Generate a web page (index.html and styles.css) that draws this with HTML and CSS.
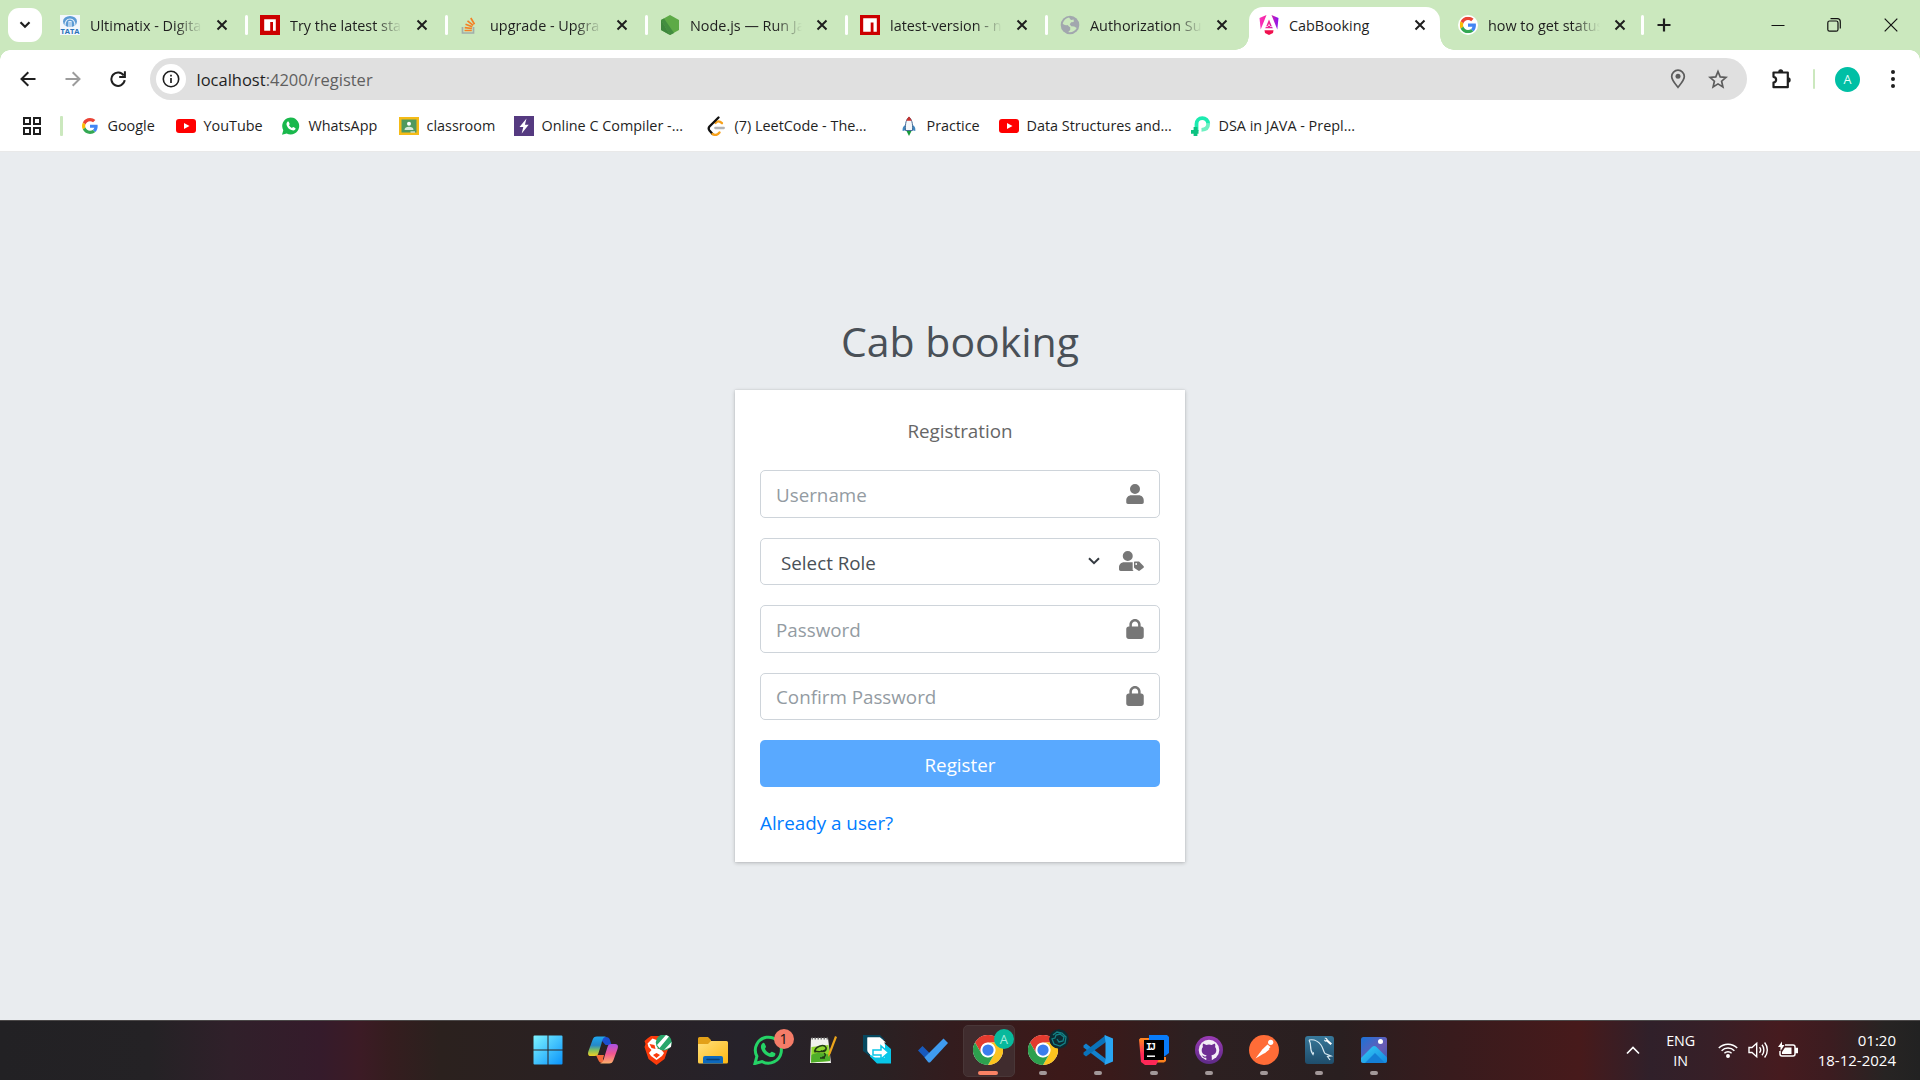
FILE: index.html
```
<!DOCTYPE html>
<html lang="en">
<head>
<meta charset="utf-8">
<title>CabBooking</title>
<link rel="stylesheet" href="styles.css">
</head>
<body>
<svg class="defs" width="0" height="0" aria-hidden="true">
  <defs>
    <linearGradient id="win" x1="0" y1="0" x2="1" y2="1"><stop offset="0" stop-color="#7df4ff"/><stop offset="1" stop-color="#0a93fb"/></linearGradient>
    <linearGradient id="cpA" x1="0" y1="0" x2="0" y2="1"><stop offset="0" stop-color="#1fa8f0"/><stop offset=".45" stop-color="#2588c8"/><stop offset=".7" stop-color="#7fbf62"/><stop offset="1" stop-color="#f2d022"/></linearGradient>
    <linearGradient id="cpB" x1="0" y1="0" x2="0" y2="1"><stop offset="0" stop-color="#a751e4"/><stop offset=".5" stop-color="#f1568f"/><stop offset="1" stop-color="#fdb06a"/></linearGradient>
    <linearGradient id="fold" x1="0" y1="0" x2="1" y2="1"><stop offset="0" stop-color="#ffe07c"/><stop offset="1" stop-color="#fdb813"/></linearGradient>
    <linearGradient id="ang" x1="0" y1="0" x2="1" y2="0"><stop offset="0" stop-color="#fb2fc0"/><stop offset=".5" stop-color="#f0258f"/><stop offset="1" stop-color="#8514f5"/></linearGradient>
    <linearGradient id="gh" x1="0" y1="0" x2="0" y2="1"><stop offset="0" stop-color="#9a3bb5"/><stop offset="1" stop-color="#5d2a86"/></linearGradient>
    <linearGradient id="sql" x1="0" y1="0" x2="0" y2="1"><stop offset="0" stop-color="#37789a"/><stop offset="1" stop-color="#1f4d6b"/></linearGradient>
    <linearGradient id="photo" x1="0" y1="0" x2="1" y2="1"><stop offset="0" stop-color="#1a73d8"/><stop offset=".6" stop-color="#6a5bb5"/><stop offset="1" stop-color="#2a62b8"/></linearGradient>
    <linearGradient id="hill" x1="0" y1="0" x2="1" y2="1"><stop offset="0" stop-color="#35cdf6"/><stop offset="1" stop-color="#1489e0"/></linearGradient>
    <linearGradient id="ij" x1="0" y1="0" x2="0" y2="1"><stop offset="0" stop-color="#ff8a1f"/><stop offset=".6" stop-color="#fe2857"/></linearGradient>

    <symbol id="i-google" viewBox="0 0 48 48">
      <path fill="#ea4335" d="M24 9.500c3.500 0 6.700 1.200 9.200 3.600l6.900-6.900C35.900 2.400 30.500 0 24 0 14.600 0 6.500 5.400 2.600 13.200l8 6.200C12.400 13.700 17.700 9.500 24 9.500z"/>
      <path fill="#4285f4" d="M47 24.500c0-1.600-.2-3.100-.4-4.500H24v9h12.900c-.6 3-2.300 5.500-4.800 7.200l7.700 6C44.400 38 47 31.800 47 24.500z"/>
      <path fill="#fbbc05" d="M10.500 28.600c-.5-1.500-.8-3-.8-4.600s.3-3.100.8-4.600l-8-6.200C.9 16.500 0 20.100 0 24s.9 7.500 2.600 10.800z"/>
      <path fill="#34a853" d="M24 48c6.500 0 11.900-2.100 15.900-5.800l-7.700-6c-2.200 1.500-4.900 2.300-8.200 2.300-6.300 0-11.600-4.200-13.500-9.900l-8 6.200C6.500 42.600 14.600 48 24 48z"/>
    </symbol>
    <symbol id="i-youtube" viewBox="0 0 20 20"><rect x="0" y="3" width="20" height="14" rx="3" fill="#f00"/><path d="M8 7l5.500 3L8 13z" fill="#fff"/></symbol>
    <symbol id="i-npm" viewBox="0 0 20 20"><path fill="#c00" d="M0 0h20v20H0z"/><path fill="#fff" d="M4.200 4.200h11.600v11.600H13V7h-2.800v8.800h-6z"/></symbol>
    <symbol id="i-npm2" viewBox="0 0 20 20"><path fill="#c00" d="M0 0h20v20H0z"/><path fill="#fff" d="M3.200 3.200h13.600v13.600h-3.300V7.500h-2.800v9.300H3.200z"/></symbol>
    <symbol id="i-whatsapp" viewBox="0 0 30 30"><path d="M2 28.500l1.900-7.200A13 13 0 1 1 9 26.500z" fill="none" stroke="#25d366" stroke-width="3"/><path d="M9.300 8.400c.8-.9 1.800-.9 2.300.1l1.300 2.800c.4 1-.9 1.900-1 2.400 1.100 2.200 2.500 3.500 4.700 4.500.8-.2 1.500-1.800 2.400-1.500l2.900 1.400c.9.500.6 1.700 0 2.600-1.300 1.600-3.400 1.700-5.500 1-4.300-1.500-6.900-4.200-8.200-8-.6-2.200-.3-3.900 1.100-5.300z" fill="#25d366"/></symbol>
    <symbol id="i-chrome" viewBox="0 0 48 48"><circle cx="24" cy="24" r="24" fill="#fff"/><path fill="#e33b2e" d="M3.200 12A24 24 0 0 1 44.800 12H24a12 12 0 0 0-10.400 18z"/><path fill="#fcc31e" d="M44.800 12A24 24 0 0 1 24 48l10.400-18A12 12 0 0 0 24 12z"/><path fill="#2da04e" d="M3.200 12A24 24 0 0 0 24 48l10.400-18a12 12 0 0 1-20.800 0z"/><circle cx="24" cy="24" r="11.500" fill="#fff"/><circle cx="24" cy="24" r="9" fill="#3b7ded"/></symbol>
    <symbol id="i-close" viewBox="0 0 12 12"><path d="M1.500 1.500l9 9m0-9l-9 9" stroke="#1f1f1f" stroke-width="2"/></symbol>
    <symbol id="i-lock" viewBox="0 0 448 512"><path d="M144 144v48H304V144c0-44.200-35.800-80-80-80s-80 35.800-80 80zM80 192V144C80 64.500 144.500 0 224 0s144 64.500 144 144v48h16c35.300 0 64 28.700 64 64V448c0 35.300-28.700 64-64 64H64c-35.300 0-64-28.700-64-64V256c0-35.300 28.700-64 64-64z"/></symbol>
  </defs>
</svg>

<header class="tabstrip">
  <button class="tab-search" aria-label="Search tabs"><svg width="12" height="8" viewBox="0 0 12 8"><path d="M1.500 1.300L6 5.800l4.500-4.500" fill="none" stroke="#1f1f1f" stroke-width="2.200"/></svg></button>
  <nav class="tabs">
    <div class="tab"><svg class="fav" viewBox="0 0 20 20"><path fill="#f3f7fc" d="M0 0h20v20H0z"/><ellipse cx="10" cy="6.500" rx="7" ry="5.500" fill="#5b9ad4"/><path d="M5 11c0-6 2.500-7 5-7s5 1 5 7M9 12V6.500h2V12" stroke="#e6f0fa" stroke-width="1.200" fill="none"/><text x="10" y="19" text-anchor="middle" font-size="7" font-weight="700" textLength="19" lengthAdjust="spacingAndGlyphs" fill="#2a72b8">TATA</text></svg><span class="title">Ultimatix - Digita</span><svg class="x"><use href="#i-close"/></svg></div>
    <div class="tab"><svg class="fav"><use href="#i-npm"/></svg><span class="title">Try the latest stab</span><svg class="x"><use href="#i-close"/></svg></div>
    <div class="tab"><svg class="fav" viewBox="0 0 20 20"><path d="M2.500 12v6h11v-6" fill="none" stroke="#a3adaa" stroke-width="1.700"/><path d="M4.500 15.500h7.300M4.700 12.600l7.200.9M5.500 9.300l6.800 2.500M7.500 5.900l5.700 4.500M10.800 3l3.700 6.200" stroke="#f48024" stroke-width="1.700"/></svg><span class="title">upgrade - Upgra</span><svg class="x"><use href="#i-close"/></svg></div>
    <div class="tab"><svg class="fav" viewBox="0 0 20 20"><path d="M10 0l9 5v10l-9 5-9-5V5z" fill="#5daa46"/><path d="M1 5l9 15-9-5z" fill="#3e863d"/><path d="M4 3.500L14 18l-4 2L1 5z" fill="#438d40"/></svg><span class="title">Node.js — Run Ja</span><svg class="x"><use href="#i-close"/></svg></div>
    <div class="tab"><svg class="fav"><use href="#i-npm2"/></svg><span class="title">latest-version - n</span><svg class="x"><use href="#i-close"/></svg></div>
    <div class="tab no-sep"><svg class="fav" viewBox="0 0 20 20"><circle cx="10" cy="10" r="9.300" fill="#a2a7ae"/><path d="M9 2.500c-3 .6-5.500 3-6.300 6 1 1.500 3 2 4.500 1.500 1.500.4 1.500 2 3 2.300V15l-2 2c3.500.8 7-1 8.500-4l-2.500-1.500-3-.2-1.500-2 1.500-2 2.500-.3V4.500L11 5z" fill="#cbe8be"/></svg><span class="title">Authorization Su</span><svg class="x"><use href="#i-close"/></svg></div>
    <div class="tab active"><svg class="fav" viewBox="0 0 20 20"><path fill="url(#ang)" d="M12.500 0L19.500 3l-1.200 11.500zM13.800 13.200H6.200L7.300 11h5.400zM7.500 0L.5 3l1.200 11.500zM10 4.500l-3 7.300h1.800L10 8.500l1.200 3.300H13z"/><path d="M5.500 15.300h9L14 18l-4 2-4-2z" fill="#f0104e"/></svg><span class="title">CabBooking</span><svg class="x"><use href="#i-close"/></svg></div>
    <div class="tab last"><svg class="fav disc" viewBox="-5 -5 58 58"><use href="#i-google" width="48" height="48"/></svg><span class="title">how to get status</span><svg class="x"><use href="#i-close"/></svg></div>
  </nav>
  <button class="new-tab" aria-label="New tab"><svg width="14" height="14" viewBox="0 0 14 14"><path d="M7 .5v13M.5 7h13" stroke="#1f1f1f" stroke-width="2.200"/></svg></button>
  <div class="window-controls">
    <svg width="14" height="14" viewBox="0 0 14 14"><path d="M.5 7.500h13" stroke="#111"/></svg>
    <svg width="14" height="14" viewBox="0 0 14 14" fill="none" stroke="#111" stroke-width="1.200"><rect x=".8" y="3" width="10.200" height="10.200" rx="1.800"/><path d="M3.500.7h6.800a3 3 0 0 1 3 3v6.800"/></svg>
    <svg width="14" height="14" viewBox="0 0 14 14"><path d="M.7.7l12.600 12.600m0-12.600L.7 13.300" stroke="#111" stroke-width="1.200"/></svg>
  </div>
</header>

<div class="toolbar">
  <div class="nav-buttons">
    <svg width="16" height="16" viewBox="0 0 16 16" fill="none" stroke="#1f1f1f" stroke-width="2"><path d="M15.500 8H2M8.300 1.200L1.500 8l6.800 6.800"/></svg>
    <svg width="16" height="16" viewBox="0 0 16 16" fill="none" stroke="#9c9c9c" stroke-width="2"><path d="M.5 8H14M7.700 1.200L14.500 8l-6.800 6.800"/></svg>
    <svg width="16" height="16" viewBox="0 0 16 16" fill="none" stroke="#1f1f1f" stroke-width="2"><path d="M13.700 4.500A6.700 6.700 0 1 0 14.700 9.200M14.900 .3v5.700H9.200"/></svg>
  </div>
  <div class="omnibox">
    <span class="site-info"><svg width="18" height="18" viewBox="0 0 18 18"><circle cx="9" cy="9" r="7.700" fill="none" stroke="#1f1f1f" stroke-width="1.600"/><path d="M9 8v5M9 4.800v1.800" stroke="#1f1f1f" stroke-width="1.700"/></svg></span>
    <span class="url">localhost<span class="path">:4200/register</span></span>
    <div class="omni-actions">
      <svg width="16" height="20" viewBox="0 0 16 20"><path d="M8 18.300C4.500 14 1.700 11 1.700 7.500a6.300 6.300 0 0 1 12.600 0C14.300 11 11.500 14 8 18.300z" fill="none" stroke="#5c5c5c" stroke-width="1.700"/><circle cx="8" cy="7.300" r="2.500" fill="#5c5c5c"/></svg>
      <svg width="20" height="20" viewBox="0 0 20 20"><path d="M10 2.500l2.200 5.400 5.800.5-4.400 3.800 1.300 5.700-4.900-3-4.900 3 1.300-5.700L2 8.400l5.800-.5z" fill="none" stroke="#5c5c5c" stroke-width="1.700"/></svg>
    </div>
  </div>
  <svg class="puzzle" width="22" height="22" viewBox="0 0 22 22"><path d="M2.500 4.500h14.300v14.700H2.500v-4.700c3.500-.7 3.500-5 0-5.700z" fill="none" stroke="#1f1f1f" stroke-width="2.200" stroke-linejoin="round"/><path d="M7.200 4a2.500 2.700 0 0 1 5 0zM17 9.300a2.700 2.600 0 0 1 0 5.200z" fill="#1f1f1f"/></svg>
  <span class="rule"></span>
  <span class="avatar">A</span>
  <svg class="dots" width="6" height="20" viewBox="0 0 6 20" fill="#1f1f1f"><circle cx="3" cy="3" r="2"/><circle cx="3" cy="10" r="2"/><circle cx="3" cy="17" r="2"/></svg>
</div>

<nav class="bookmarks">
  <svg width="18" height="18" viewBox="0 0 18 18" fill="none" stroke="#1f1f1f" stroke-width="2"><path d="M1 1h6v6H1zM11 1h6v6h-6zM1 11h6v6H1zM11 11h6v6h-6z"/></svg>
  <span class="rule"></span>
  <a class="bm"><svg viewBox="-6 -6 60 60"><use href="#i-google" width="48" height="48"/></svg>Google</a>
  <a class="bm"><svg><use href="#i-youtube"/></svg>YouTube</a>
  <a class="bm"><svg viewBox="0 0 20 20"><path d="M1 18.700l1.300-4.500A8.500 8.500 0 1 1 5.700 17.500z" fill="#19b84c"/><path d="M6.300 6c.5-.6 1.200-.6 1.500 0l.8 1.800c.3.600-.5 1.200-.6 1.500.7 1.300 1.500 2 2.800 2.600.5-.1 1-1.100 1.500-.9l1.900.9c.5.300.3 1.100 0 1.600-1 1.200-2.500 1-3.800.5-2.500-1-4-2.500-4.700-4.800-.4-1.300-.2-2.400.6-3.200z" fill="#fff"/></svg>WhatsApp</a>
  <a class="bm"><svg viewBox="0 0 20 20"><path fill="#f5bb16" d="M0 1h20v18H0z"/><path fill="#50995e" d="M2.500 3.500h15v13h-15z"/><circle cx="10" cy="7.800" r="2" fill="#fff"/><path d="M5.500 14c0-2 2-3.200 4.500-3.200s4.500 1.200 4.500 3.200z" fill="#d7eadb"/><path d="M11.500 15.500h4.500v1h-4.500z" fill="#fff"/></svg>classroom</a>
  <a class="bm"><svg viewBox="0 0 20 20"><path fill="#553a80" d="M0 0h20v20H0z"/><path fill="#fff" d="M12.500 2.500L5.500 11h3.800L7.700 17.500l7-8.800h-3.800z"/></svg>Online C Compiler -...</a>
  <a class="bm leet"><svg viewBox="0 0 20 20" fill="none" stroke-linecap="round" stroke-width="2.300"><path d="M16 7.200c-2.500-2.400-4.500-2.300-6.500-.2" stroke="#f7a11b"/><path d="M12.500 1.500L3.500 10.500c-1 1.200-1 2.700 0 4l3 3.500" stroke="#111"/><path d="M6.500 18c2.500 1.500 5 1.200 7-1.500" stroke="#f7a11b"/><path d="M9.300 12h8.500" stroke="#b3b3b3"/></svg>(7) LeetCode - The...</a>
  <a class="bm"><svg viewBox="0 0 20 20"><path d="M6.500 9C3.500 10.500 3.500 13 3.700 15l3.500-1h5.600l3.500 1c.2-2 .2-4.500-2.800-6z" fill="#3f87c0"/><path d="M10 1c2.600 2.500 4 5.500 3.500 13.500h-7C6 6.500 7.400 3.500 10 1z" fill="#f4f7fa" stroke="#456c96"/><path d="M10 .5c1.300 1.300 2 2.500 2.700 4.200H7.300C8 3 8.700 1.800 10 .5z" fill="#c8322d"/><path d="M7.500 15h5L10 20z" fill="#179b3a"/></svg>Practice</a>
  <a class="bm"><svg><use href="#i-youtube"/></svg>Data Structures and...</a>
  <a class="bm"><svg viewBox="0 0 20 20" fill="none" stroke-width="3.800"><path d="M5.500 15V8a5.700 5.700 0 0 1 11.700-.2" stroke="#1cebb0"/><path d="M17.200 7.500c0 4-2.500 6.200-6.700 6.300" stroke="#6ff0c2"/><path d="M0 15.800h7.500M4.500 11v9" stroke="#0cc281"/></svg>DSA in JAVA - Prepl...</a>
</nav>

<main class="page">
  <h1 class="brand">Cab booking</h1>
  <section class="card">
    <p class="card-title">Registration</p>
    <div class="field"><span>Username</span><svg width="18" height="20" viewBox="0 0 448 512"><path d="M224 256A128 128 0 1 0 224 0a128 128 0 1 0 0 256zM130 288C55 288 0 345 0 420v48c0 26 18 44 44 44H404c26 0 44-18 44-44V420C448 345 393 288 318 288z"/></svg></div>
    <div class="field select"><span>Select Role</span><svg class="caret" width="12" height="8" viewBox="0 0 12 8"><path d="M1 1.200L6 6.200l5-5" fill="none" stroke="#343a40" stroke-width="2"/></svg><svg width="25" height="20" viewBox="0 0 640 512"><path d="M224 256A128 128 0 1 0 224 0a128 128 0 1 0 0 256zM130 288C55 288 0 345 0 420v48c0 26 18 44 44 44H375c-10-8-18-18-25-28V288zM384 283V409c0 8 3 17 9 23l96 70c13 13 33 13 46 0l92-72c13-13 13-33 0-45l-107-107c-6-6-14-9-23-9H400c-9 0-16 7-16 14zm56 27a24 24 0 1 1 0 48 24 24 0 1 1 0-48z"/></svg></div>
    <div class="field"><span>Password</span><svg width="18" height="20"><use href="#i-lock"/></svg></div>
    <div class="field"><span>Confirm Password</span><svg width="18" height="20"><use href="#i-lock"/></svg></div>
    <button class="register">Register</button>
    <a class="login-link">Already a user?</a>
  </section>
</main>

<footer class="taskbar">
  <div class="apps">
    <span class="app"><svg viewBox="0 0 30 30"><path fill="url(#win)" d="M.5 1.500A1 1 0 0 1 1.500.5H14.500v14H.5zM15.500.5H28.500a1 1 0 0 1 1 1v13h-14zM.5 15.500h14v14h-13a1 1 0 0 1-1-1zM15.500 15.500h14v13a1 1 0 0 1-1 1h-13z"/></svg></span>
    <span class="app"><svg viewBox="0 0 30 30"><path d="M14 2h4c2 0 3.500 1 4 3l1.500 5h-6L14 6z" fill="#1c4fd0"/><path d="M8 20h8l-1 4 2 4h-2c-3 0-4-1-5-3.500z" fill="#f4693b"/><path d="M9 1.500h9c-3 1-3.500 3-4.500 7L10.500 18c-.5 2-1.500 3-4 3H3c-3 0-3.500-2-2.500-5L4.500 5C5.300 2.500 6.500 1.500 9 1.500z" fill="url(#cpA)"/><path d="M21 28.500h-9c3-1 3.500-3 4.500-7L19.500 12c.5-2 1.500-3 4-3H27c3 0 3.500 2 2.500 5L25.500 25c-.8 2.500-2 3.500-4.500 3.500z" fill="url(#cpB)"/></svg></span>
    <span class="app"><svg viewBox="0 0 30 30"><path d="M8 1h12l3 2.500 2.500 3-1 3 1 3-4 11.500L13.500 30 5.500 24 1.500 12l1-3-1-3L5 3z" fill="#fb3b0b"/><path d="M13.500 5l4-1.500 5 5-1 3.500-3 3 2.500 3-2 3-5.500 4-5.500-4-2-3 2.500-3-3-3-1-3.500 5-5z" fill="#fff"/><path d="M6.500 9l5 1 1 4-4-1zm14 0l-5 1-1 4 4-1zM10 20l3.500-2 3.500 2-3.500 3z" fill="#fb3b0b"/><circle cx="20.800" cy="7.500" r="8" fill="#28a56a"/><path d="M14 10L23 0l3 1.500-9.500 11.500zM21 15l7.500-8-.5 5z" fill="#fff"/></svg></span>
    <span class="app"><svg viewBox="0 0 30 30"><path d="M0 3.500A1.500 1.500 0 0 1 1.500 2H10l3 3v5H0z" fill="#e2a018"/><path d="M0 9h10l3-3h15.500A1.500 1.500 0 0 1 30 7.500V27a1.500 1.500 0 0 1-1.500 1.500h-27A1.500 1.500 0 0 1 0 27z" fill="url(#fold)"/><path d="M5 28.500V23a2 2 0 0 1 2-2h16a2 2 0 0 1 2 2v5.500z" fill="#0d69bd"/><path d="M9 24.500h12" stroke="#073f75" stroke-width="1.500" stroke-linecap="round"/></svg></span>
    <span class="app"><svg><use href="#i-whatsapp"/></svg><b class="badge count">1</b></span>
    <span class="app"><svg viewBox="0 0 30 30"><path d="M3 3h17l3 25H2z" fill="#f1f1ee"/><path d="M3.500 12l17-2 1.500 16-19 1.500z" fill="#8fd72f"/><path d="M3.500 20c5-3 12-2 18.500 0v6l-19 1.500z" fill="#4fae2a"/><path d="M7 17.500c-1-6 9-9 11-5 1 4-4 5-5 3m-7 0c4 2 9 1 12-1M12 23h5m-1-5c3 2 0 5-2 4" fill="none" stroke="#213a14" stroke-width="1.500"/><path d="M3.500 3.500h17" stroke="#777" stroke-width="2" stroke-dasharray="1.500 1.500"/><path d="M29 2L22.500 19l-2.500 3 .5-4L27 1z" fill="#eca51b"/></svg></span>
    <span class="app"><svg viewBox="0 0 30 30"><path d="M0 0h17l5 5H8v17L0 16z" fill="#06485f"/><path d="M4.500 2.500H17l6 5h-9v15H10l-5.500-6z" fill="#fff"/><path d="M13 7h7l8 7v14.500H14l-7-7V20h6z" fill="#08c6e8"/><path d="M4.500 2.500H17c3 2 5 5 5 8v12H12c-4-2-7.500-5-7.500-8z" fill="#fff"/><path d="M10 15h8v-4l7.500 6.500L18 24v-4h-8z" fill="#fff" stroke="#08c6e8" stroke-width="1.500"/></svg></span>
    <span class="app"><svg viewBox="0 0 30 30"><path d="M0 15.500l4.500-4.500 10 10-3.500 6z" fill="#185abd"/><path d="M6.500 22.500L25.500 3.500l4.500 4.500L12.500 27c-.8.800-1.700.8-2.500 0z" fill="#3f9bef"/></svg></span>
    <span class="app current"><svg><use href="#i-chrome"/></svg><b class="badge letter">A</b></span>
    <span class="app open"><svg><use href="#i-chrome"/></svg><b class="badge"><svg viewBox="0 0 20 20"><circle cx="10" cy="10" r="10" fill="#0c2a31"/><path d="M4 6l4-3 5 1 4 4-1 6-5 3-6-2-2-5 3-1 1-3 4-1 4 3-1 4-4 1-2-3" fill="none" stroke="#138286" stroke-width="1.300"/></svg></b></span>
    <span class="app open"><svg viewBox="0 0 30 30"><path d="M.5 10.500L3 8.500l20 15.500v5.500L.5 12.500z" fill="#1381cd"/><path d="M.5 19.500L3 21.500 23 7V0L.5 17.500z" fill="#0a72b9"/><path d="M21.500 0L30 3.500v23L21.500 30l1-6V7z" fill="#29a5f2"/></svg></span>
    <span class="app open"><svg viewBox="0 0 30 30"><path d="M10 0h18l2 2v16l-8 6H10z" fill="#087cfa"/><path d="M18 22h9v4l-2 1.500h-7z" fill="#fc801d"/><path d="M0 4.500L1.500 3H10v21h10l-3 6H6l-4-3z" fill="url(#ij)"/><path d="M5 5h20v20H5z" fill="#000"/><text x="7" y="14.500" font-family="Liberation Mono" font-size="10" font-weight="700" fill="#fff" textLength="10">IJ</text><path d="M8 21.200h8" stroke="#fff" stroke-width="1.500"/></svg></span>
    <span class="app open"><svg viewBox="0 0 30 30"><circle cx="15" cy="15" r="14" fill="url(#gh)"/><circle cx="15" cy="15" r="10.300" fill="#f3eef6"/><path d="M12.300 25.500v-2.800c-2.600.5-3.300-1.100-4.500-2.300 1.600-.2 2.300 1.300 3.400 1.200.7 0 1.200-.6 1.400-1.200-3-.4-4.900-1.800-4.900-5.300 0-1.300.4-2.300 1.200-3.200-.3-1-.3-2.200.1-3.200 1.200 0 2.200.6 3.200 1.300a10 10 0 0 1 5.600 0c1-.7 2-1.300 3.200-1.300.4 1 .4 2.200.1 3.200.8.900 1.200 1.900 1.200 3.200 0 3.500-1.900 4.900-4.900 5.300.3.500.4 1.200.4 2v3.100z" fill="#6f2e93"/></svg></span>
    <span class="app open"><svg viewBox="0 0 30 30"><circle cx="15" cy="15" r="15" fill="#ff6c37"/><circle cx="21.700" cy="7.300" r="2.600" fill="#fff"/><path d="M18.500 9.500l3 2.500-5 5.500L6.500 23.500l6.800-9z" fill="#fff"/><path d="M14 15l6-1-5.500 4" fill="none" stroke="#fff" stroke-width="1.500"/></svg></span>
    <span class="app open"><svg viewBox="0 0 30 30"><rect x="1" y="1" width="29" height="28" rx="3" fill="url(#sql)"/><path d="M5 5c5-1 9 1 12 5 2.500 3.500 2 6 4 8.500l6 2.500-3.500.5 2.500 3.500M5 5c1 2 1.500 3 1.500 5.500 0 4 1 7 2.500 9 .5-1 .5-2 1-2" fill="none" stroke="#d8e9f2" stroke-width="1.200"/><path d="M20.500 3c1-.5 2 0 2.500.5l1 1.500 4 3.500-1.500 1.500-4-3.500c-1.500.5-2.500-.5-2.500-2l1.500 1 1-1z" fill="#fff"/></svg></span>
    <span class="app open"><svg viewBox="0 0 30 30"><rect x="2" y="2" width="26" height="26" rx="2.500" fill="url(#photo)"/><circle cx="21.500" cy="6.500" r="2.500" fill="#fff"/><path d="M2 23L13 12c1.500-1.500 3-1.500 4.500 0L28 22.500v3a2.500 2.500 0 0 1-2.500 2.500h-21A2.500 2.500 0 0 1 2 25.500z" fill="url(#hill)"/><path d="M6 28l10-10 10 10z" fill="#147fd6"/></svg></span>
  </div>
  <div class="tray">
    <svg width="14" height="9" viewBox="0 0 14 9"><path d="M1 7.500l6-6 6 6" fill="none" stroke="#fff" stroke-width="1.700"/></svg>
    <div class="lang"><span>ENG</span><span>IN</span></div>
    <div class="status">
      <svg width="20" height="16" viewBox="0 0 20 16" fill="none" stroke="#fff" stroke-width="1.500"><path d="M.8 6a13 13 0 0 1 18.400 0M3.600 8.700a9 9 0 0 1 12.800 0M6.400 11.300a5 5 0 0 1 7.200 0"/><circle cx="10" cy="14" r="1.200" fill="#fff"/></svg>
      <svg width="20" height="18" viewBox="0 0 20 18" fill="none" stroke="#fff" stroke-width="1.400"><path d="M1 6.500h3L8.700 2.300v13.400L4 11.500H1zM11.500 6.300c1.300 1.500 1.300 3.900 0 5.400M14 3.800c2.500 3 2.500 7.400 0 10.400M16.600 1.500c3.600 4.300 3.600 10.700 0 15"/></svg>
      <svg width="20" height="18" viewBox="0 0 20 18"><path d="M7 4h8a2 2 0 0 1 2 2v7a2 2 0 0 1-2 2H4a2 2 0 0 1-2-2v-3M18 7.500h1.300v4H18z" fill="none" stroke="#fff" stroke-width="1.500"/><path d="M7 6.500h6.500v6.500H4v-2zM4 .5L0 6h2.500v4L6.500 4H4z" fill="#fff"/></svg>
    </div>
    <div class="clock"><span>01:20</span><span>18-12-2024</span></div>
  </div>
</footer>
</body>
</html>
```
FILE: styles.css
```
* { box-sizing: border-box; }
body {
  margin: 0;
  width: 1920px;
  height: 1080px;
  overflow: hidden;
  display: flex;
  flex-direction: column;
  background: #fff;
  color: #1f1f1f;
  font: 14.4px/20px "Open Sans", "Noto Sans", sans-serif;
}
svg { display: block; flex: none; }
button { border: 0; padding: 0; font: inherit; background: none; }
.defs { position: absolute; }

/* Tab strip */
.tabstrip {
  display: flex;
  height: 50px;
  flex: none;
  background: #cbe8be;
}
.tab-search {
  width: 34px;
  height: 34px;
  margin: 8px 6px 0 8px;
  display: grid;
  place-items: center;
  border-radius: 11px;
  background: #fff;
}
.tabs { display: flex; width: 1596px; }
.tab {
  position: relative;
  width: 200px;
  height: 50px;
  padding: 0 20px 0 12px;
  display: flex;
  align-items: center;
}
.tab::after {
  content: "";
  position: absolute;
  right: 0;
  top: 15px;
  width: 3px;
  height: 20px;
  border-radius: 2px;
  background: #fff;
}
.tab.no-sep::after { display: none; }
.fav { width: 20px; height: 20px; margin-right: 10px; }
.fav.disc { border-radius: 50%; background: #fff; }
.title {
  width: 112px;
  flex: none;
  padding-top: 2px;
  white-space: nowrap;
  margin-right: 14px;
  -webkit-mask-image: linear-gradient(90deg, #000 76%, transparent);
  mask-image: linear-gradient(90deg, #000 76%, transparent);
}
.x { width: 12px; height: 12px; }
.tab.active {
  width: 191px;
  height: 43px;
  margin: 7px 0 0 1px;
  padding: 0 0 7px 10px;
  border-radius: 14px 14px 0 0;
  background: #fff;
}
.tab.active .title { margin-right: 13px; -webkit-mask-image: none; mask-image: none; }
.tab.active::before,
.tab.active::after {
  content: "";
  position: absolute;
  top: auto;
  bottom: 0;
  width: 14px;
  height: 14px;
  border-radius: 0;
}
.tab.active::before { left: -14px; background: radial-gradient(circle at 0 0, #cbe8be 13.5px, #fff 14px); }
.tab.active::after { right: -14px; background: radial-gradient(circle at 100% 0, #cbe8be 13.5px, #fff 14px); }
.tab.last { width: 204px; padding-left: 18px; }
.new-tab { width: 39px; display: grid; place-items: center; }
.window-controls {
  display: grid;
  grid-template-columns: 57px 56px 58px;
  margin-left: 66px;
  place-items: center;
}

/* Toolbar */
.toolbar {
  display: flex;
  align-items: center;
  height: 50px;
  flex: none;
  padding-top: 8px;
  background:
    radial-gradient(circle at 10px 10px, #fff 9.5px, #cbe8be 10px) 0 0 / 10px 10px no-repeat,
    radial-gradient(circle at 0 10px, #fff 9.5px, #cbe8be 10px) 100% 0 / 10px 10px no-repeat,
    #fff;
}
.nav-buttons { display: flex; gap: 29px; padding-left: 19.5px; width: 150px; }
.omnibox {
  display: flex;
  align-items: center;
  width: 1597px;
  height: 42px;
  padding: 0 19px 0 6px;
  border-radius: 21px;
  background: #e0e0e0;
}
.site-info {
  width: 30px;
  height: 30px;
  display: grid;
  place-items: center;
  border-radius: 50%;
  background: #fff;
}
.url { margin-left: 10.5px; padding-top: 1px; font-size: 16.5px; }
.path { color: #5f5f5f; }
.omni-actions { display: flex; gap: 22px; margin-left: auto; }
.puzzle { margin-left: 24px; }
.rule { width: 2px; height: 20px; border-radius: 1px; background: #cbe8be; }
.toolbar .rule { margin-left: 20px; }
.avatar {
  width: 25px;
  height: 25px;
  margin-left: 20px;
  border-radius: 50%;
  background: #00bfa5;
  color: #e5fffa;
  font-size: 12.5px;
  line-height: 25px;
  text-align: center;
}
.dots { margin-left: 29.5px; }

/* Bookmarks */
.bookmarks {
  display: grid;
  grid-template-columns: 37px 20px 96px 105px 118px 115px 192px 193px 100px 192px 200px;
  align-items: center;
  height: 52px;
  flex: none;
  padding-left: 23px;
  border-bottom: 1px solid #e9e9e9;
}
.bookmarks .rule { width: 3px; }
.bm { display: flex; align-items: center; gap: 7.5px; white-space: nowrap; }
.bm svg { width: 20px; height: 20px; }
.bm.leet { gap: 8.5px; }

/* Registration page */
.page {
  height: 868px;
  flex: none;
  display: flex;
  flex-direction: column;
  align-items: center;
  padding-top: 156px;
  background: #e9ecef;
}
.brand {
  margin: 0 0 16px;
  height: 66px;
  color: #495057;
  font-size: 41px;
  font-weight: 400;
  line-height: 66px;
}
.card {
  width: 450px;
  height: 472px;
  padding: 26px 25px 25px;
  background: #fff;
  box-shadow: 0 0 1px rgba(0, 0, 0, .13), 0 1px 4px rgba(0, 0, 0, .22);
  color: #666;
  font-size: 18.8px;
  line-height: 30px;
}
.card-title { margin: 0 0 24px; text-align: center; }
.field {
  display: flex;
  align-items: center;
  height: 47.5px;
  margin-bottom: 20px;
  padding: 0 15px;
  border: 1px solid #ced4da;
  border-radius: 5px;
  color: #939ba2;
}
.field span { flex: 1; padding-top: 2px; }
.field svg { fill: #777; }
.field.select { padding-left: 20px; color: #495057; }
.field.select span { padding-top: 3px; }
.field .caret { margin-right: 19px; }
.register {
  width: 400px;
  height: 47px;
  display: block;
  padding-top: 2px;
  border-radius: 5px;
  background: #59a9ff;
  color: #fff;
}
.login-link { display: block; margin-top: 21px; color: #007bff; }

/* Taskbar */
.taskbar {
  display: flex;
  height: 60px;
  flex: none;
  padding-left: 520.5px;
  border-top: 1px solid #4b4848;
  background: linear-gradient(90deg, #222124 0, #242225 150px, #30202a 230px, #351b2b 320px, #3c1b25 360px, #351d1f 390px, #2b211e 440px, #2a2122 560px, #26222a 740px, #2a2123 880px, #331c1e 950px, #3c1919 1060px, #391a1a 1110px, #2d2021 1190px, #291f20 1340px, #381b1d 1450px, #471a1b 1580px, #30202a 1650px, #371f27 1710px, #461b1f 1780px, #3c1c20 1830px, #272423 1885px, #222 1920px);
}
.apps { display: flex; }
.app {
  position: relative;
  width: 55.05px;
  height: 58px;
  display: grid;
  place-items: center;
}
.app > svg { position: relative; width: 30px; height: 30px; }
.badge {
  position: absolute;
  left: 33px;
  top: 8px;
  width: 20px;
  height: 20px;
  border-radius: 50%;
  overflow: hidden;
  text-align: center;
  font-weight: 400;
  line-height: 20px;
}
.badge svg { width: 20px; height: 20px; }
.count { background: #f47c68; color: #111; }
.letter { background: #08b99c; color: #a8eddf; font-size: 13px; }
.open::after,
.current::after {
  content: "";
  position: absolute;
  left: 23.5px;
  bottom: 4px;
  width: 8px;
  height: 4px;
  border-radius: 2px;
  background: #a29899;
}
.current::after { left: 17.5px; width: 20px; background: #fa8265; }
.current::before {
  content: "";
  position: absolute;
  left: 2.5px;
  top: 4px;
  width: 50px;
  height: 50px;
  border: 1px solid #493738;
  border-radius: 5px;
  background: #402c2e;
}
.tray {
  display: flex;
  align-items: center;
  height: 58px;
  margin-left: auto;
  padding-right: 24px;
  color: #fff;
  font-size: 15px;
  line-height: 20px;
}
.lang, .clock { display: flex; flex-direction: column; align-items: center; }
.lang { width: 40px; margin-left: 21px; padding-top: 1px; font-size: 14.3px; }
.status { display: flex; align-items: center; gap: 10px; margin: 0 20px 0 17px; }
.clock { align-items: flex-end; }
```
